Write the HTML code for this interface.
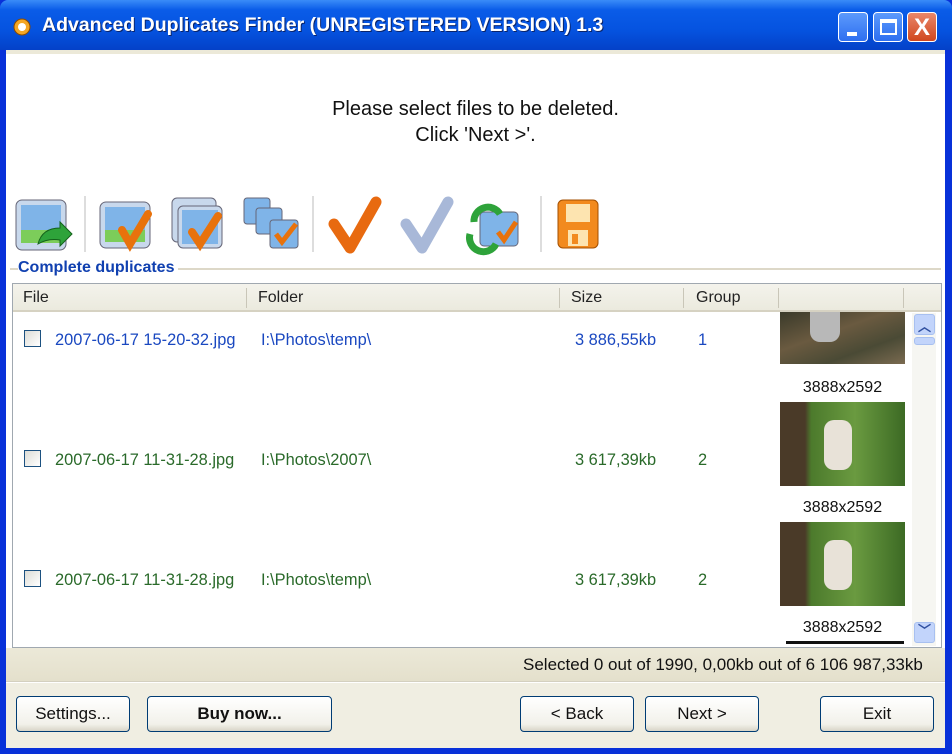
<!DOCTYPE html>
<html><head><meta charset="utf-8"><style>
*{margin:0;padding:0;box-sizing:border-box}
body{width:952px;height:754px;overflow:hidden;background:#0831d9;font-family:"Liberation Sans",sans-serif;position:relative}
.abs{position:absolute}
#title{left:0;top:0;width:952px;height:50px;background:linear-gradient(#3a8cf8,#0a5ce8 20%,#0553e0 60%,#0441c8);border-radius:8px 8px 0 0}
#title .t{left:42px;top:14px;color:#fff;font-weight:bold;font-size:19.5px;text-shadow:1px 1px 0 #0a246a}
.wb{top:12px;width:30px;height:30px;border:1px solid #fff;border-radius:4px;background:linear-gradient(#5c9afc,#2e6ff0)}
#client{left:6px;top:50px;width:939px;height:698px;background:#fff}
.msg{width:939px;text-align:center;font-size:20px;color:#111;line-height:26px}
#hdr{left:0;top:0;width:900px;height:28px;background:linear-gradient(#f4f3ec,#ebeade);border-bottom:2px solid #d6d2c2;font-size:16px;color:#222}
#hdr span{position:absolute;top:5px}
.hs{position:absolute;top:4px;width:1px;height:20px;background:#c9c6b8}
.row{font-size:16.4px}
.cb{width:17px;height:17px;border:1px solid #1c5180;background:linear-gradient(135deg,#dcdcd6,#fff)}
.thumb{width:125px}
.dim{font-size:16px;color:#111;width:125px;text-align:center}
.btn{height:36px;border:1px solid #003c74;border-radius:4px;background:linear-gradient(#fff,#f2f1ea 80%,#d8d5c8);font-size:17px;text-align:center;line-height:34px;color:#111}
</style></head><body>
<div id="title" class="abs">
 <svg class="abs" style="left:12px;top:17px" width="22" height="20"><circle cx="10" cy="10" r="8" fill="#f5a623" stroke="#8a4a00"/><circle cx="10" cy="10" r="4" fill="#fff"/></svg>
 <div class="t abs">Advanced Duplicates Finder (UNREGISTERED VERSION) 1.3</div>
 <div class="wb abs" style="left:838px"><div class="abs" style="left:8px;top:19px;width:10px;height:4px;background:#fff"></div></div>
 <div class="wb abs" style="left:873px"><div class="abs" style="left:6px;top:6px;width:17px;height:16px;border:2px solid #fff;border-top-width:4px"></div></div>
 <div class="wb abs" style="left:907px;background:linear-gradient(#e9876a,#d0471e)"><div class="abs" style="left:6px;top:1px;color:#fff;font-size:24px;font-weight:bold">X</div></div>
</div>
<div id="client" class="abs">
 <div class="abs" style="left:0;top:0;width:939px;height:4px;background:#ece9d8"></div>
 <div class="msg abs" style="left:0;top:46px">Please select files to be deleted.<br>Click 'Next &gt;'.</div>
 <svg class="abs" style="left:6px;top:144px" width="600" height="62">
  <g><rect x="4" y="6" width="50" height="50" rx="6" fill="#c8d8ec" stroke="#667"/><rect x="9" y="11" width="40" height="38" fill="#7fb4e8"/><rect x="9" y="36" width="40" height="13" fill="#7ccd5a"/><path d="M26 50 Q30 34 48 34 L48 28 L60 40 L48 52 L48 46 Q36 44 26 50Z" fill="#2ea33a" stroke="#14621a"/></g>
  <rect x="72" y="2" width="2" height="56" fill="#ddd"/>
  <g><rect x="88" y="8" width="50" height="46" rx="6" fill="#c8d8ec" stroke="#667"/><rect x="93" y="13" width="40" height="35" fill="#7fb4e8"/><rect x="93" y="36" width="40" height="12" fill="#7ccd5a"/><path d="M110 36 L118 50 L136 20" stroke="#e8720c" stroke-width="8" fill="none" stroke-linecap="round"/></g>
  <g><rect x="160" y="4" width="44" height="44" rx="5" fill="#c8d8ec" stroke="#667"/><rect x="166" y="12" width="44" height="42" rx="5" fill="#c8d8ec" stroke="#667"/><rect x="170" y="16" width="36" height="34" fill="#7fb4e8"/><path d="M180 38 L188 50 L206 22" stroke="#e8720c" stroke-width="8" fill="none" stroke-linecap="round"/></g>
  <g><rect x="232" y="4" width="26" height="26" rx="3" fill="#7fb4e8" stroke="#667"/><rect x="244" y="14" width="26" height="26" rx="3" fill="#7fb4e8" stroke="#667"/><rect x="258" y="26" width="28" height="28" rx="3" fill="#7fb4e8" stroke="#667"/><path d="M264 40 L270 48 L284 30" stroke="#e8720c" stroke-width="5" fill="none"/></g>
  <rect x="300" y="2" width="2" height="56" fill="#ddd"/>
  <path d="M322 30 L338 54 L364 8" stroke="#e86a10" stroke-width="11" fill="none" stroke-linecap="round" stroke-linejoin="round"/>
  <path d="M394 30 L410 54 L436 8" stroke="#a8b8d8" stroke-width="11" fill="none" stroke-linecap="round" stroke-linejoin="round"/>
  <g><rect x="468" y="18" width="38" height="34" rx="4" fill="#7fb4e8" stroke="#667"/><path d="M462 28 A14 14 0 0 1 488 20" stroke="#2ea33a" stroke-width="7" fill="none"/><path d="M484 50 A14 14 0 0 1 458 40" stroke="#2ea33a" stroke-width="7" fill="none"/><path d="M486 38 L492 46 L504 28" stroke="#e8720c" stroke-width="5" fill="none"/></g>
  <rect x="528" y="2" width="2" height="56" fill="#ddd"/>
  <g><rect x="546" y="6" width="40" height="48" rx="5" fill="#f28a1e" stroke="#a34f00"/><rect x="554" y="10" width="24" height="18" fill="#fde4b0"/><rect x="556" y="36" width="20" height="16" fill="#fde4b0"/><rect x="560" y="40" width="6" height="10" fill="#f28a1e"/></g>
 </svg>
 <div class="abs" style="left:4px;top:218px;width:931px;height:2px;background:#ddd8c8"></div>
 <div class="abs" style="left:12px;top:209px;padding-right:4px;background:#fff;color:#1040b0;font-weight:bold;font-size:16px">Complete duplicates</div>
 <div class="abs" style="left:6px;top:233px;width:930px;height:365px;border:1px solid #a0a8b0;background:#fff"></div>
 <div id="hdr" class="abs" style="left:7px;top:234px;width:928px">
  <span style="left:10px">File</span><div class="hs" style="left:233px"></div>
  <span style="left:245px">Folder</span><div class="hs" style="left:546px"></div>
  <span style="left:558px">Size</span><div class="hs" style="left:670px"></div>
  <span style="left:683px">Group</span><div class="hs" style="left:765px"></div><div class="hs" style="left:890px"></div>
 </div>
 <div class="cb abs" style="left:18px;top:280px"></div>
 <div class="row abs" style="left:49px;top:281px;color:#1a48c0">2007-06-17 15-20-32.jpg</div>
 <div class="row abs" style="left:255px;top:281px;color:#1a48c0">I:\Photos\temp\</div>
 <div class="row abs" style="left:569px;top:281px;color:#1a48c0">3 886,55kb</div>
 <div class="row abs" style="left:692px;top:281px;color:#1a48c0">1</div>
 <div class="cb abs" style="left:18px;top:400px"></div>
 <div class="row abs" style="left:49px;top:401px;color:#2a6a2a">2007-06-17 11-31-28.jpg</div>
 <div class="row abs" style="left:255px;top:401px;color:#2a6a2a">I:\Photos\2007\</div>
 <div class="row abs" style="left:569px;top:401px;color:#2a6a2a">3 617,39kb</div>
 <div class="row abs" style="left:692px;top:401px;color:#2a6a2a">2</div>
 <div class="cb abs" style="left:18px;top:520px"></div>
 <div class="row abs" style="left:49px;top:521px;color:#2a6a2a">2007-06-17 11-31-28.jpg</div>
 <div class="row abs" style="left:255px;top:521px;color:#2a6a2a">I:\Photos\temp\</div>
 <div class="row abs" style="left:569px;top:521px;color:#2a6a2a">3 617,39kb</div>
 <div class="row abs" style="left:692px;top:521px;color:#2a6a2a">2</div>
 <div class="thumb abs" style="left:774px;top:262px;height:52px;background:linear-gradient(160deg,#3a3a2a,#6a5a40 40%,#4a4a35 70%,#7a6a50)"><div class="abs" style="left:30px;top:0;width:30px;height:30px;background:#b8b8b8;border-radius:0 0 10px 10px"></div></div>
 <div class="dim abs" style="left:774px;top:329px">3888x2592</div>
 <div class="thumb abs" style="left:774px;top:352px;height:84px;background:linear-gradient(90deg,#4a3a28 20%,#4c7a2c 25%,#6a9a40 60%,#3c6a24)"><div class="abs" style="left:44px;top:18px;width:28px;height:50px;background:#e8e2d8;border-radius:10px"></div></div>
 <div class="dim abs" style="left:774px;top:449px">3888x2592</div>
 <div class="thumb abs" style="left:774px;top:472px;height:84px;background:linear-gradient(90deg,#4a3a28 20%,#4c7a2c 25%,#6a9a40 60%,#3c6a24)"><div class="abs" style="left:44px;top:18px;width:28px;height:50px;background:#e8e2d8;border-radius:10px"></div></div>
 <div class="dim abs" style="left:774px;top:569px">3888x2592</div>
 <div class="abs" style="left:780px;top:591px;width:118px;height:3px;background:#111"></div>
 <div class="abs" style="left:906px;top:263px;width:24px;height:333px;background:#f6f6f2"></div>
 <div class="abs" style="left:908px;top:264px;width:21px;height:21px;border:1px solid #a8c0f0;border-radius:3px;background:#c2d4fb;color:#3050a0;font-size:13px;text-align:center;line-height:24px;font-weight:bold">︿</div>
 <div class="abs" style="left:908px;top:287px;width:21px;height:8px;border:1px solid #a8c0f0;border-radius:3px;background:#c2d4fb"></div>
 <div class="abs" style="left:908px;top:572px;width:21px;height:21px;border:1px solid #a8c0f0;border-radius:3px;background:#c2d4fb;color:#3050a0;font-size:13px;text-align:center;line-height:16px;font-weight:bold">﹀</div>
 <div class="abs" style="left:0;top:598px;width:939px;height:34px;background:linear-gradient(#ece9d8,#e4e0cc);border-bottom:1px solid #d4d0c0"></div>
 <div class="abs" style="left:517px;top:605px;font-size:17px;color:#111">Selected 0 out of 1990, 0,00kb out of 6 106 987,33kb</div>
 <div class="abs" style="left:0;top:633px;width:939px;height:65px;background:#f0eee2"></div>
 <div class="btn abs" style="left:10px;top:646px;width:114px">Settings...</div>
 <div class="btn abs" style="left:141px;top:646px;width:185px;font-weight:bold">Buy now...</div>
 <div class="btn abs" style="left:514px;top:646px;width:114px">&lt; Back</div>
 <div class="btn abs" style="left:639px;top:646px;width:114px">Next &gt;</div>
 <div class="btn abs" style="left:814px;top:646px;width:114px">Exit</div>
</div>
</body></html>
